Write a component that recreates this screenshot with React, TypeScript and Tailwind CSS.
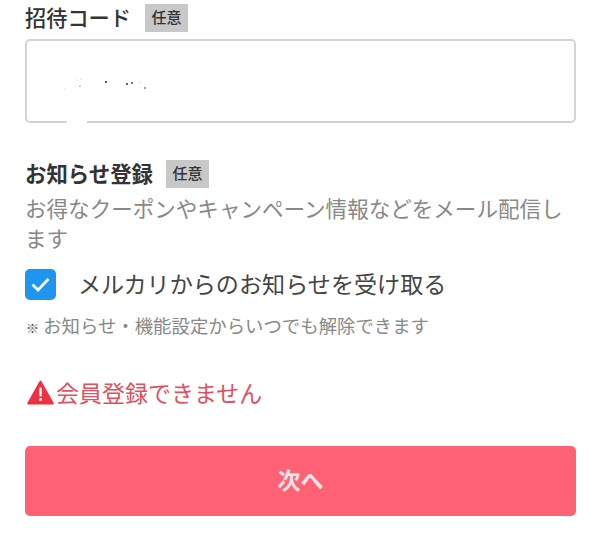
const jp = "font-['Noto_Sans_CJK_JP','Noto_Sans',sans-serif]";

function OptionalBadge() {
  return (
    <span className="flex h-[28px] w-[43px] items-center justify-center bg-[#c8c8c8] pb-px text-[15px] font-medium text-[#333333]">
      任意
    </span>
  );
}

function Specks() {
  return (
    <svg width="120" height="40" viewBox="0 0 120 40" className="ml-[28px] mt-[28px]">
      <g fill="#333333">
        <circle cx="51" cy="13" r="1.1" />
        <circle cx="72" cy="15" r="1" />
        <circle cx="77" cy="14" r="0.9" />
        <circle cx="90" cy="19" r="0.8" />
        <circle cx="25" cy="17" r="0.6" />
      </g>
      <g fill="#b5b5b5">
        <circle cx="22" cy="11" r="0.6" />
        <circle cx="26" cy="10" r="0.6" />
        <circle cx="10" cy="20" r="0.5" />
        <circle cx="85" cy="13" r="0.6" />
      </g>
    </svg>
  );
}

function WarningIcon() {
  return (
    <svg width="27" height="25" viewBox="0 0 27 25">
      <path d="M13.5 1.5 L25.8 23.5 H1.2 Z" fill="#f0303f" stroke="#f0303f" strokeWidth="2" strokeLinejoin="round" />
      <rect x="12.3" y="7.5" width="2.4" height="9" rx="1" fill="#ffffff" />
      <circle cx="13.5" cy="19.5" r="1.5" fill="#ffffff" />
    </svg>
  );
}

export default function App() {
  return (
    <div className={`${jp} h-[533px] w-[600px] overflow-hidden bg-white px-[25px] pt-[4px]`}>
      <div className="flex h-[28px] items-center">
        <h2 className="pb-[3px] text-[21.2px] font-medium leading-none text-[#333333]">招待コード</h2>
        <span className="ml-[14px]">
          <OptionalBadge />
        </span>
      </div>
      <div className="relative mt-[7px] h-[84px] w-[551px] rounded-[5px] border-2 border-[#d4d4d4] bg-white">
        <Specks />
        <span className="absolute bottom-[-2px] left-[40px] h-[2px] w-[20px] bg-white" />
      </div>

      <div className="mt-[37px] flex h-[28px] items-center">
        <h2 className="pb-[3px] text-[21.4px] font-bold leading-none text-[#333333]">お知らせ登録</h2>
        <span className="ml-[13px]">
          <OptionalBadge />
        </span>
      </div>
      <p className="mt-[5px] text-[21.55px] leading-[30px] text-[#888888]">
        お得なクーポンやキャンペーン情報などをメール配信します
      </p>
      <label className="mt-[16px] flex h-[31px] items-center">
        <span className="flex h-[31px] w-[31px] items-center justify-center rounded-[5px] bg-[#1e96ef]">
          <svg width="21" height="17" viewBox="0 0 21 17" fill="none">
            <path d="M2.5 8.5 L8 14 L18.5 3" stroke="#ffffff" strokeWidth="2.8" />
          </svg>
        </span>
        <span className="ml-[22px] pb-px text-[23.1px] leading-none text-[#444444]">
          メルカリからのお知らせを受け取る
        </span>
      </label>
      <p className="mt-[13px] pl-px text-[18.4px] leading-[24px] text-[#888888]">
        <span className="text-[13px] text-[#555555]">※</span> お知らせ・機能設定からいつでも解除できます
      </p>
      <div className="mt-[38px] flex h-[28px] items-center pl-[2px]">
        <WarningIcon />
        <span className="ml-[2px] text-[23px] leading-none text-[#e0505f]">会員登録できません</span>
      </div>
      <button className="mt-[40px] flex h-[70px] w-[551px] items-center justify-center rounded-[5px] bg-[#ff6274] pb-[3px] text-[23px] font-bold text-[#fbe6e9]">
        次へ
      </button>
    </div>
  );
}
